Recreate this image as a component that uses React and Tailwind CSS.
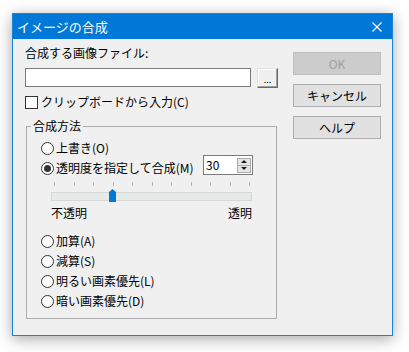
import React from "react";

const Radio = ({ checked, label }) => (
  <div className="flex h-[16px] items-center">
    <span className="flex h-[13px] w-[13px] shrink-0 items-center justify-center rounded-full border border-[#333333] bg-white">
      {checked && <span className="h-[7px] w-[7px] rounded-full bg-[#333333]" />}
    </span>
    <span className="ml-[2px] whitespace-nowrap">{label}</span>
  </div>
);

const Btn = ({ children, disabled }) => (
  <div
    className={
      "flex h-[23px] w-[88px] items-center justify-center border " +
      (disabled
        ? "border-[#bfbfbf] bg-[#cccccc] text-[#a0a0a0]"
        : "border-[#adadad] bg-[#e1e1e1] text-black")
    }
  >
    {children}
  </div>
);

export default function App() {
  const ticks = Array.from({ length: 11 });
  return (
    <div className="h-[352px] w-[409px] bg-white pl-[12px] pt-[13px] font-['Noto_Sans_CJK_JP',sans-serif] text-[12px] leading-[16px] text-black">
      <div className="flex h-[323px] w-[381px] flex-col border border-[#1883d7] bg-[#f0f0f0] shadow-[0_3px_14px_rgba(0,0,0,0.35)]">
        {/* Title bar */}
        <div className="flex h-[25px] shrink-0 items-center bg-[#0078d7] pl-[4px] pr-[10px] text-white">
          <span className="text-[13px] leading-[16px]">イメージの合成</span>
          <svg className="ml-auto" width="10" height="10" viewBox="0 0 10 10">
            <path d="M0.5 0.5 L9.5 9.5 M9.5 0.5 L0.5 9.5" stroke="white" strokeWidth="1.1" fill="none" />
          </svg>
        </div>

        {/* Body */}
        <div className="flex flex-1 items-start pl-[12px] pr-[11px]">
          {/* Left column */}
          <div className="flex w-[253px] flex-col pt-[6px]">
            <div className="h-[16px] whitespace-nowrap">合成する画像ファイル:</div>
            <div className="mt-[7px] flex h-[20px] items-start">
              <div className="h-[19px] w-[226px] border border-[#7a7a7a] bg-white" />
              <div className="ml-[6px] flex h-[20px] w-[21px] items-end justify-center border border-b-[#696969] border-l-[#e3e3e3] border-r-[#696969] border-t-[#e3e3e3] bg-[#f0f0f0] pb-[3px] text-[9px] leading-[9px] shadow-[inset_-1px_-1px_0_#a0a0a0,inset_1px_1px_0_#ffffff]">
                ...
              </div>
            </div>
            <div className="mt-[6px] flex h-[16px] items-center">
              <span className="h-[13px] w-[13px] shrink-0 border border-[#333333] bg-white" />
              <span className="ml-[3px] whitespace-nowrap">クリップボードから入力(C)</span>
            </div>

            <fieldset className="ml-[1px] mt-[8px] w-[251px] border border-[#adadad] p-0 pb-[9px]">
              <legend className="ml-[4px] px-[2px] leading-[16px]">合成方法</legend>
              <div className="flex flex-col pl-[14px] pt-[6px]">
                <Radio label="上書き(O)" />
                <div className="mt-[4px] flex h-[16px] w-[212px] items-start">
                  <Radio checked label="透明度を指定して合成(M)" />
                  <div className="-mt-[5px] ml-auto flex h-[20px] w-[50px] items-center border border-[#7a7a7a] bg-white pl-[2px] pr-[1px]">
                    <span className="flex-1 leading-[16px]">30</span>
                    <div className="flex h-[15px] w-[14px] flex-col border border-[#acacac] bg-[#e6e6e6]">
                      <div className="flex flex-1 items-center justify-center border-b border-[#acacac]">
                        <svg width="6" height="3" viewBox="0 0 6 3">
                          <polygon points="0,3 3,0 6,3" fill="#1a1a1a" />
                        </svg>
                      </div>
                      <div className="flex flex-1 items-center justify-center">
                        <svg width="6" height="3" viewBox="0 0 6 3">
                          <polygon points="0,0 6,0 3,3" fill="#1a1a1a" />
                        </svg>
                      </div>
                    </div>
                  </div>
                </div>

                {/* Slider */}
                <div className="ml-[10px] mt-[6px] flex w-[202px] flex-col">
                  <div className="flex h-[4px] justify-between px-[3px]">
                    {ticks.map((_, i) => (
                      <span key={i} className="h-[4px] w-[1px] bg-[#b4b4b4]" />
                    ))}
                  </div>
                  <div className="relative mt-[6px] h-[9px] w-[201px] border border-[#d6d6d6] bg-[#e7eaea]">
                    <svg className="absolute left-[57px] top-[-4px]" width="7" height="13" viewBox="0 0 7 13">
                      <polygon points="0,3 3.5,0 7,3 7,13 0,13" fill="#0078d7" />
                    </svg>
                  </div>
                  <div className="mt-[4px] flex h-[16px] w-[201px] justify-between">
                    <span>不透明</span>
                    <span>透明</span>
                  </div>
                </div>

                <div className="mt-[12px] flex flex-col gap-[4px]">
                  <Radio label="加算(A)" />
                  <Radio label="減算(S)" />
                  <Radio label="明るい画素優先(L)" />
                  <Radio label="暗い画素優先(D)" />
                </div>
              </div>
            </fieldset>
          </div>

          {/* Right column */}
          <div className="ml-[15px] flex w-[88px] flex-col gap-[9px] pt-[13px]">
            <Btn disabled>OK</Btn>
            <Btn>キャンセル</Btn>
            <Btn>ヘルプ</Btn>
          </div>
        </div>
      </div>
    </div>
  );
}
